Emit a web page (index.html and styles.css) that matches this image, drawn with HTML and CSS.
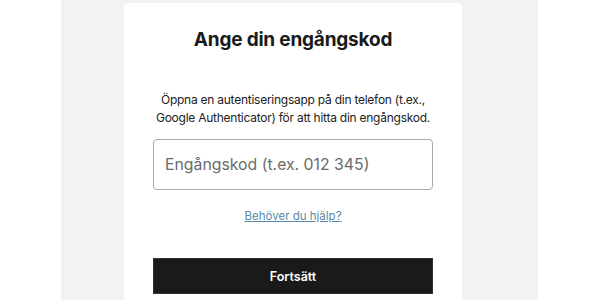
FILE: index.html
```html
<!DOCTYPE html>
<html lang="sv">
<head>
    <meta charset="UTF-8">
    <meta name="viewport" content="width=device-width, initial-scale=1.0">
    <title>Ange din engångskod</title>
    <link rel="stylesheet" href="styles.css">
</head>
<body>
    <div class="page">
        <div class="card">
            <h1 class="title">Ange din engångskod</h1>
            <p class="intro">Öppna en autentiseringsapp på din telefon (t.ex., Google Authenticator) för att hitta din engångskod.</p>
            <input type="text" class="code-input" placeholder="Engångskod (t.ex. 012 345)">
            <a href="#" class="help-link">Behöver du hjälp?</a>
            <button class="submit-button">Fortsätt</button>
        </div>
    </div>
</body>
</html>
```

FILE: styles.css
```css
body {
    margin: 0;
    font-family: Inter, "Noto Sans", sans-serif;
    background: #fff;
    color: #1a1a1a;
}
.page {
    width: 477px;
    margin-left: 61px;
    height: 300px;
    background: #f2f2f2;
    padding-top: 3px;
    box-sizing: border-box;
    overflow: hidden;
}
.card {
    width: 338px;
    margin-left: 63px;
    background: white;
    border-radius: 4px;
    padding: 25px 29px 20px;
    box-sizing: border-box;
    display: flex;
    flex-direction: column;
    align-items: center;
}
.title {
    margin: 0;
    font-size: 19px;
    font-weight: 700;
    line-height: 24px;
    letter-spacing: -0.2px;
}
.intro {
    margin: 39px -6px 0;
    font-size: 12px;
    line-height: 18px;
    letter-spacing: -0.25px;
    text-align: center;
    color: #222;
}
.code-input {
    margin-top: 12px;
    width: 100%;
    height: 51px;
    box-sizing: border-box;
    border: 1px solid #a9a9a9;
    border-radius: 4px;
    padding: 0 11px;
    font-family: inherit;
    font-size: 15.8px;
    color: #333;
}
.code-input::placeholder {
    color: #6b6b6b;
}
.help-link {
    margin-top: 18px;
    font-size: 11.5px;
    line-height: 16px;
    color: #5a89a8;
    text-decoration: underline;
}
.submit-button {
    margin-top: 34px;
    width: 100%;
    height: 36px;
    background: #1a1a1a;
    color: white;
    border: 1px solid #333;
    border-radius: 0;
    font-family: inherit;
    font-size: 12.5px;
    font-weight: 600;
    cursor: pointer;
}
```
